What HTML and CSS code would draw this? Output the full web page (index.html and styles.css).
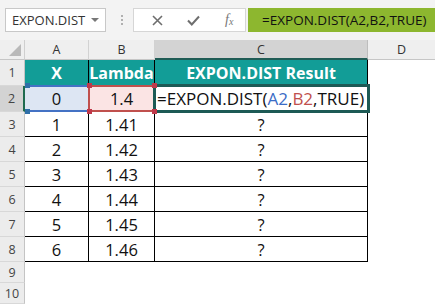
FILE: index.html
```html
<!DOCTYPE html>
<html>
<head>
<meta charset="utf-8">
<link rel="stylesheet" href="styles.css">
</head>
<body>
<div class="app">
  <div class="toolbar">
    <div class="namebox"><span class="nb-text">EXPON.DIST</span><span class="caret"></span></div>
    <div class="grip"><i></i><i></i><i></i></div>
    <div class="fbuttons">
      <svg class="ico-x" width="11" height="11" viewBox="0 0 11 11"><path d="M1 1 L10 10 M10 1 L1 10" stroke="#6e6e6e" stroke-width="1.6" fill="none"/></svg>
      <svg class="ico-check" width="13" height="11" viewBox="0 0 13 11"><path d="M1 5.5 L4.8 9.5 L12 1.5" stroke="#6e6e6e" stroke-width="2" fill="none"/></svg>
      <span class="fx">f<sub>x</sub></span>
    </div>
    <div class="finput">=EXPON.DIST(A2,B2,TRUE)</div>
  </div>
  <div class="sheet">
    <div class="corner"><span class="tri"></span></div>
    <div class="ch">A</div>
    <div class="ch">B</div>
    <div class="ch sel">C</div>
    <div class="ch last">D</div>

    <div class="rh">1</div>
    <div class="tc th">X</div>
    <div class="tc th">Lambda</div>
    <div class="tc th">EXPON.DIST Result</div>
    <div class="ec"></div>

    <div class="rh sel">2</div>
    <div class="tc refa">0<span class="h tl blue"></span><span class="h bl blue"></span></div>
    <div class="tc refb">1.4<span class="h tl"></span><span class="h tr"></span><span class="h bl"></span><span class="h br"></span></div>
    <div class="tc active">=EXPON.DIST(<span class="ca">A2</span>,<span class="cb">B2</span>,TRUE)</div>
    <div class="ec"></div>

    <div class="rh">3</div>
    <div class="tc">1</div>
    <div class="tc">1.41</div>
    <div class="tc">?</div>
    <div class="ec"></div>

    <div class="rh">4</div>
    <div class="tc">2</div>
    <div class="tc">1.42</div>
    <div class="tc">?</div>
    <div class="ec"></div>

    <div class="rh">5</div>
    <div class="tc">3</div>
    <div class="tc">1.43</div>
    <div class="tc">?</div>
    <div class="ec"></div>

    <div class="rh">6</div>
    <div class="tc">4</div>
    <div class="tc">1.44</div>
    <div class="tc">?</div>
    <div class="ec"></div>

    <div class="rh">7</div>
    <div class="tc">5</div>
    <div class="tc">1.45</div>
    <div class="tc">?</div>
    <div class="ec"></div>

    <div class="rh">8</div>
    <div class="tc">6</div>
    <div class="tc">1.46</div>
    <div class="tc">?</div>
    <div class="ec"></div>

    <div class="rh">9</div>
    <div class="ec"></div><div class="ec"></div><div class="ec"></div><div class="ec"></div>

    <div class="rh">10</div>
    <div class="ec"></div><div class="ec"></div><div class="ec"></div><div class="ec"></div>
  </div>
</div>
</body>
</html>
```
FILE: styles.css
```css
* { box-sizing: border-box; }
html, body { margin: 0; padding: 0; background: #fff; }
body { width: 435px; height: 304px; overflow: hidden; font-family: "Open Sans", sans-serif; }

.app { width: 435px; }

.toolbar {
  height: 40px;
  background: #f3f3f3;
  display: flex;
  align-items: flex-start;
  padding-top: 8px;
}
.namebox {
  margin-left: 5px;
  width: 101px;
  height: 24px;
  background: #fff;
  border: 1px solid #c8c8c8;
  display: flex;
  align-items: center;
  padding-left: 6px;
  font-size: 13px;
  color: #333;
}
.nb-text { flex: 1; }
.caret {
  width: 0; height: 0;
  border-left: 4px solid transparent;
  border-right: 4px solid transparent;
  border-top: 4px solid #777;
  margin-right: 6px;
}
.grip {
  width: 27px;
  height: 24px;
  display: flex;
  flex-direction: column;
  align-items: center;
  justify-content: center;
  gap: 2px;
  padding-left: 4px;
}
.grip i { display: block; width: 2px; height: 2px; background: #b0b0b0; }
.fbuttons {
  width: 113px;
  height: 24px;
  background: #fff;
  border: 1px solid #d6d6d6;
  display: flex;
  align-items: center;
  padding-left: 18px;
}
.ico-x { margin-right: 24px; }
.ico-check { margin-right: 25px; }
.fx {
  font-family: "Liberation Serif", serif;
  font-style: italic;
  font-size: 14px;
  color: #777;
  line-height: 1;
}
.fx sub { font-size: 10px; vertical-align: -1px; }
.finput {
  margin-left: 2px;
  flex: 1;
  height: 24px;
  background: #8db72f;
  display: flex;
  align-items: center;
  padding-left: 14px;
  font-size: 13.5px;
  color: #111;
}

.sheet {
  display: grid;
  grid-template-columns: 25px 64px 66px 213px 67px;
  grid-template-rows: 20px 26px 26px 25px 25px 25px 25px 25px 25px 21px 21px;
}
.corner {
  background: #efefef;
  border-right: 1px solid #cfcfcf;
  border-bottom: 1px solid #c6c6c6;
  position: relative;
}
.tri {
  position: absolute;
  right: 3px;
  bottom: 3px;
  width: 0; height: 0;
  border-left: 12px solid transparent;
  border-bottom: 12px solid #b9b9b9;
}
.ch {
  background: #efefef;
  border-right: 1px solid #d2d2d2;
  border-bottom: 1px solid #c6c6c6;
  display: flex;
  align-items: center;
  justify-content: center;
  font-size: 12.5px;
  color: #333;
}
.ch.sel {
  background: #d3d3d3;
  border-bottom: 2px solid #1f5c55;
  border-right-color: #bdbdbd;
}
.ch.last { border-right: none; }
.rh {
  background: #ececec;
  border-right: 1px solid #c4c4c4;
  border-bottom: 1px solid #d8d8d8;
  display: flex;
  align-items: center;
  justify-content: center;
  font-size: 12.5px;
  color: #444;
}
.rh.sel {
  background: #d3d3d3;
  border-right: 2px solid #1f6b4f;
}
.tc {
  border-right: 1px solid #000;
  border-bottom: 1px solid #000;
  display: flex;
  align-items: center;
  justify-content: center;
  font-size: 16.5px;
  color: #111;
  position: relative;
  white-space: nowrap;
}
.tc.th {
  background: #129d97;
  color: #fff;
  font-weight: 700;
  font-size: 16px;
  border-bottom: none;
}
.ec { background: #fff; }

.refa { background: #dde6f3; }
.refa::after {
  content: "";
  position: absolute;
  left: 0; right: -1px; top: -1px; bottom: -1px;
  border-top: 2px solid #4472c4;
  border-bottom: 2px solid #4472c4;
  z-index: 2;
}
.refb { background: #fbe4e4; }
.refb::after {
  content: "";
  position: absolute;
  left: -1px; right: -1px; top: -1px; bottom: -1px;
  border: 2px solid #c0504d;
  z-index: 3;
}
.h {
  position: absolute;
  width: 5px; height: 5px;
  background: #c0394b;
  z-index: 5;
}
.h.blue { background: #2f6fa8; }
.h.tl { left: -2px; top: -3px; }
.h.tr { right: -3px; top: -3px; }
.h.bl { left: -2px; bottom: -3px; }
.h.br { right: -3px; bottom: -3px; }
.refa .h.tl, .refa .h.bl { left: 0; }

.active {
  justify-content: flex-start;
  padding-left: 2px;
  font-size: 17px;
  background: #fff;
}
.active::after {
  content: "";
  position: absolute;
  left: -2px; right: -3px; top: -2px; bottom: -2px;
  border: 3px solid #1d5a55;
  z-index: 4;
}
.ca { color: #3a6cc6; }
.cb { color: #c0504d; }
```
